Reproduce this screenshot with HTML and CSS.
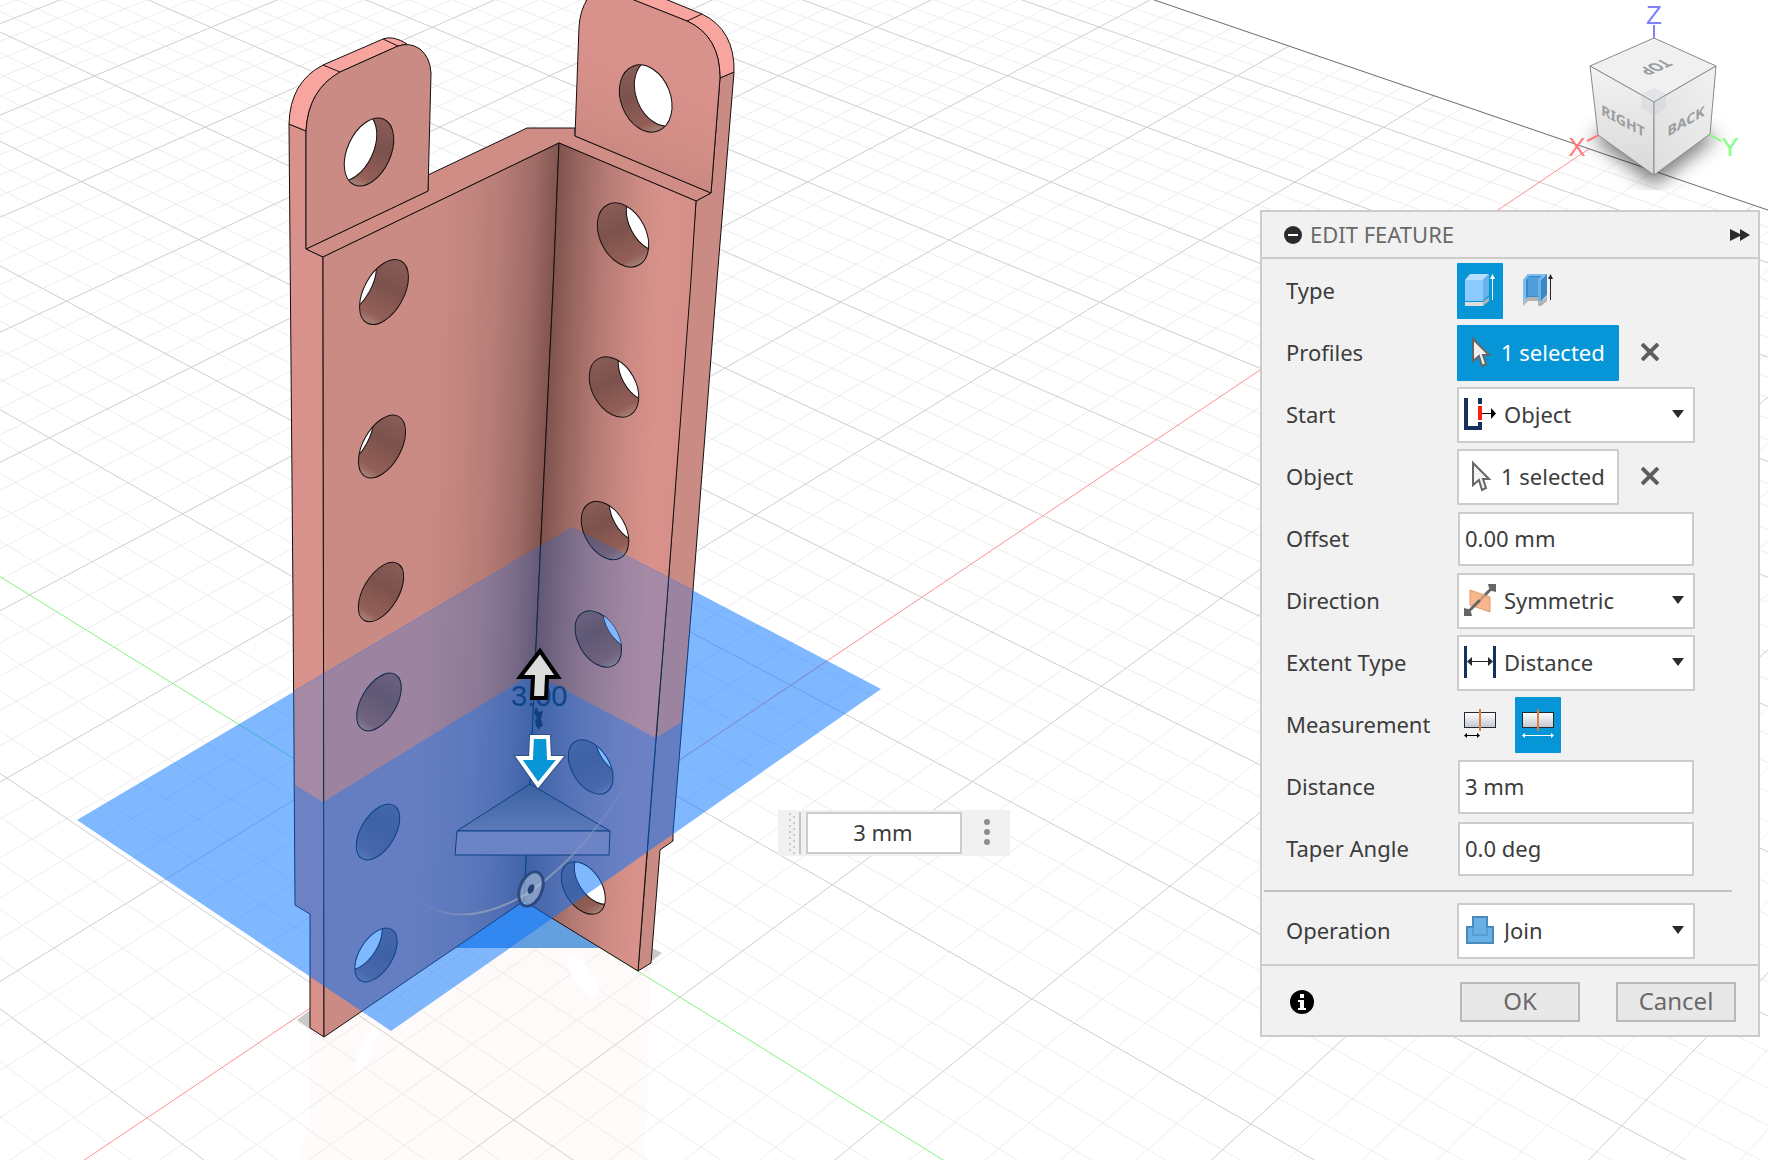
FILE: index.html
```html
<!DOCTYPE html>
<html lang="en">
<head>
<meta charset="utf-8">
<title>Edit Feature</title>
<link rel="stylesheet" href="styles.css">
</head>
<body>
<svg class="scene" viewBox="0 0 1768 1160" preserveAspectRatio="xMidYMid slice" role="img" aria-label="Bracket model">
  <defs>
    <linearGradient id="leftFace" gradientUnits="userSpaceOnUse" x1="323" y1="132" x2="559" y2="143">
      <stop offset="0" stop-color="#cb8b85"/><stop offset=".52" stop-color="#cb8b85"/><stop offset=".76" stop-color="#b87d77"/><stop offset=".9" stop-color="#a06c67"/><stop offset="1" stop-color="#835551"/>
    </linearGradient>
    <linearGradient id="rightFace" gradientUnits="userSpaceOnUse" x1="559" y1="143" x2="697" y2="149">
      <stop offset="0" stop-color="#7f534e"/><stop offset=".15" stop-color="#98655f"/><stop offset=".35" stop-color="#b57a74"/><stop offset=".6" stop-color="#cd8b84"/><stop offset=".8" stop-color="#d9928b"/><stop offset="1" stop-color="#d48f88"/>
    </linearGradient>
    <linearGradient id="tabFace" gradientUnits="userSpaceOnUse" x1="590" y1="180" x2="640" y2="60">
      <stop offset="0" stop-color="#bf817a"/><stop offset=".4" stop-color="#cf8c85"/><stop offset="1" stop-color="#d9928b"/>
    </linearGradient>
    <linearGradient id="bore" x1="0" y1="0" x2="0" y2="1">
      <stop offset="0" stop-color="#8a5d57"/><stop offset=".4" stop-color="#7c524c"/><stop offset=".85" stop-color="#935f57"/><stop offset="1" stop-color="#a88379"/>
    </linearGradient>
    <linearGradient id="gusset" x1="0" y1="0" x2="0" y2="1">
      <stop offset="0" stop-color="#785341"/><stop offset="1" stop-color="#b88275"/>
    </linearGradient>
    <linearGradient id="arcFade" gradientUnits="userSpaceOnUse" x1="418" y1="0" x2="642" y2="0">
      <stop offset="0" stop-color="#8496b8" stop-opacity="0"/><stop offset=".25" stop-color="#8496b8"/><stop offset=".6" stop-color="#8496b8"/><stop offset="1" stop-color="#8496b8" stop-opacity="0"/>
    </linearGradient>
    <linearGradient id="mirror" x1="0" y1="0" x2="0" y2="1">
      <stop offset="0" stop-color="#f6dcd6" stop-opacity=".16"/><stop offset="1" stop-color="#f6dcd6" stop-opacity=".1"/>
    </linearGradient>
  </defs>

  <path id="minorLines" class="grid-minor"/>
  <path id="majorLines" class="grid-major"/>
  <path id="edgeLine" class="grid-edge"/>
  <path id="axisX" class="axis-x"/>
  <path id="axisY" class="axis-y"/>

  <!-- floor reflection and contact shadows -->
  <path fill="url(#mirror)" d="M310 1028L324 1037L524 901L638 971L651 963L645 1160H297L310 1120Z"/>
  <g fill="#fff"><ellipse cx="583" cy="976" rx="9" ry="24" transform="rotate(-35 583 976)"/><ellipse cx="366" cy="1050" rx="6" ry="24" transform="rotate(24 366 1050)"/></g>
  <path fill="#c9c9c9" d="M297 1020L310 1010V1029ZM652 948L662 953L652 961Z"/>
  <path fill="#649fe0" d="M524 901L455 948H601Z"/>

  <!-- bracket body -->
  <g class="solid">
    <path fill="#d9928b" d="M289 124L306 131V249L323 257L324 1037L310 1028V914L295 905L293 600Z"/>
    <path fill="#cb8b85" d="M720 78L734 72L717 280L693 590L673 833V841L660 850L651 963L638 971L667 600L696 201L711 193Z"/>
    <path fill="#cf8d85" d="M306 249L323 257L559 143L696 201L711 193L575 136V128H527L428 175V191Z"/>
    <path fill="url(#leftFace)" d="M323 257L559 143L553 290L538 600L530 783L524 901L324 1037Z"/>
    <path fill="url(#rightFace)" d="M559 143L696 201L691 280L667 600L651 800L638 971L524 901L530 783L538 600L553 290Z"/>
    <path fill="#f7a59e" d="M289 124Q290 82 323 65L383 39Q393 35 407 44L398 46L340 72Q308 90 306 131Z"/>
    <path fill="#cb8b85" d="M306 131Q308 90 340 72L398 46Q410 42 420 49Q430 57 431 73L428 191L306 249Z"/>
    <path fill="#f7a59e" d="M631 -1L665 -1L702 14Q735 30 734 72L720 78Q720 36 687 21Z"/>
    <path fill="url(#tabFace)" d="M575 136L579 27Q580 10 588 -2H629L687 21Q720 36 720 78L711 193Z"/>
    <path fill="none" d="M323 65L340 72M383 39L398 46M702 14L687 21"/>
  </g>
  <g id="holes"></g>
  <g class="solid">
    <path fill="url(#gusset)" d="M530 784L457 831H610Z"/>
    <path fill="#d8958a" d="M457 831H610L609 855H455Z"/>
  </g>

  <!-- work plane: faint where the body is in front of it -->
  <path fill="#0071ff" fill-opacity=".23" d="M294 691L572 527L693 590L681 722L656 738L533 673L323 802L295 785Z"/>
  <path fill="#0071ff" fill-opacity=".5" fill-rule="evenodd" d="M77 820L572 527L881 689L391 1031ZM294 691L572 527L693 590L681 722L656 738L533 673L323 802L295 785Z"/>
  <g id="planeOpenings"></g>

  <!-- move handles -->
  <path fill="none" stroke="url(#arcFade)" stroke-width="2" d="M418 901Q464 932 530 892Q592 848 642 758"/>
  <g transform="rotate(22 531 889)"><ellipse cx="531" cy="889" rx="11" ry="18" fill="#b9cbdc" fill-opacity=".55" stroke="#2c4a80" stroke-width="3"/><ellipse cx="531" cy="889" rx="3" ry="5" fill="#24406e"/></g>
  <text class="dimension" x="511" y="706">3.00</text>
  <path fill="#11407f" d="M536 707L539 712L543 711L541 719L543 726L540 727L539 730L536 726L535 720L537 718L534 713Z"/>
  <path fill="#dcdcdc" stroke="#000" stroke-width="4" d="M540 651L558 677H547L546 698H532L533 677H520Z"/>
  <path fill="#0696d7" stroke="#1d4270" stroke-opacity=".6" stroke-width="6" d="M532 737H548L549 758H560L538 785L519 758H531Z"/>
  <path fill="#0696d7" stroke="#fff" stroke-width="4" d="M532 737H548L549 758H560L538 785L519 758H531Z"/>
</svg>

<svg class="viewcube" viewBox="0 0 228 190" role="img" aria-label="View cube">
  <defs>
    <filter id="soft" x="-50%" y="-50%" width="200%" height="200%"><feGaussianBlur stdDeviation="9"/></filter>
    <linearGradient id="cubeRight" x1="0" y1="0" x2="0" y2="1"><stop offset="0" stop-color="#f3f3f3"/><stop offset="1" stop-color="#d8d8d8"/></linearGradient>
    <linearGradient id="cubeBack" x1="1" y1="0" x2="0" y2="1"><stop offset="0" stop-color="#f1f1f1"/><stop offset="1" stop-color="#dedede"/></linearGradient>
  </defs>
  <path fill="#000" fill-opacity=".5" filter="url(#soft)" d="M50 136L114 114L178 136L114 186Z"/>
  <path stroke="#7f7fff" stroke-width="2" d="M114 25V39"/>
  <path stroke="#ff7f7f" stroke-width="2" d="M47 141L59 135"/>
  <path stroke="#7fff7f" stroke-width="2" d="M169 134L181 141"/>
  <g stroke="#8a8a8a" stroke-width="1" stroke-linejoin="round">
    <path fill="#f0f0f0" d="M114 38L176 66L114 102L50 66Z"/>
    <path fill="url(#cubeRight)" d="M50 66L114 102V175L58 135Z"/>
    <path fill="url(#cubeBack)" d="M176 66L114 102V175L170 134Z"/>
  </g>
  <path fill="#b8c0d0" fill-opacity=".25" d="M114 88L126 94V108L114 116L101 108V94Z"/>
  <g class="cube-label" text-anchor="middle">
    <text transform="translate(83 126) skewY(28)">RIGHT</text>
    <text transform="translate(146 126) skewY(-30)">BACK</text>
    <text transform="translate(110 64) rotate(157) skewX(37)">TOP</text>
  </g>
  <g class="axis-label" text-anchor="middle">
    <text x="114" y="24" fill="#7f7fff">Z</text>
    <text x="37" y="156" fill="#ff7f7f">X</text>
    <text x="190" y="156" fill="#7fff7f">Y</text>
  </g>
</svg>

<form class="quick-entry">
  <svg class="grip" width="8" height="42" viewBox="0 0 8 42" aria-hidden="true"><path stroke="#ccc" stroke-width="2" stroke-dasharray="2 4" d="M2 1V42M6 4V42"/></svg>
  <input class="quick-input" type="text" value="3 mm" aria-label="Distance value">
  <button class="more" type="button" aria-label="More options"><svg width="6" height="26" viewBox="0 0 6 26"><g fill="#8c8c8c"><circle cx="3" cy="3" r="3"/><circle cx="3" cy="13" r="3"/><circle cx="3" cy="23" r="3"/></g></svg></button>
</form>

<form class="panel">
  <header class="panel-head">
    <button class="plain" type="button" aria-label="Collapse"><svg width="18" height="18" viewBox="0 0 18 18"><circle cx="9" cy="9" r="9" fill="#2b2b2b"/><path stroke="#fff" stroke-width="2" d="M4 9H14"/></svg></button>
    <h1 class="title">EDIT FEATURE</h1>
    <button class="plain expand" type="button" aria-label="Dock panel"><svg width="20" height="12" viewBox="0 0 20 12"><path fill="#2b2b2b" d="M0 0L10 5V0L20 6L10 12V7L0 12Z"/></svg></button>
  </header>

  <div class="panel-body">
    <div class="row">
      <span class="label">Type</span>
      <div class="toggles">
        <button class="toggle on" type="button" aria-label="Solid extrude"><svg width="32" height="32" viewBox="0 0 32 32">
          <path fill="#dcdcdc" d="M1 28H19V32H1Z"/><path fill="#b4b4b4" d="M19 28L25 23V27L19 32Z"/>
          <path fill="#8bcaff" d="M1 6H19V27H1Z"/><path fill="#b5deff" d="M1 6L6 0H25L19 6Z"/><path fill="#69b1e8" d="M19 6L25 0V21L19 27Z"/>
          <path stroke="#fff" d="M28.500 3V26"/><path fill="#fff" d="M26 5L28.500 0L31 5Z"/></svg></button>
        <button class="toggle" type="button" aria-label="Thin extrude"><svg width="32" height="32" viewBox="0 0 32 32">
          <path fill="#b4b4b4" d="M1 28L6 23H17L21 26L25 22V27L19 32H16V27H6L1 32Z"/>
          <path fill="#3c87c4" d="M1 6L6 0H25V21L19 27H16V23H6L1 27Z"/>
          <path fill="#4f9fdd" d="M6 3H20L16 7V22H6Z"/><path fill="#7cc0f3" d="M1 6L6 0H25L19 6H16L20 2H7L4 6V25L1 27Z"/><path fill="#6ab3eb" d="M16 6H19V27H16Z"/>
          <path stroke="#222" d="M28.500 3V26"/><path fill="#222" d="M26 5L28.500 0L31 5Z"/></svg></button>
      </div>
    </div>
    <div class="row">
      <span class="label">Profiles</span>
      <button class="pick on" type="button"><svg width="20" height="32" viewBox="0 0 20 32"><path fill="#f0f0f0" stroke="#666" stroke-width="2" d="M2 3V25L8 20L11 30L15 28L12 19H18Z"/></svg>1 selected</button>
      <button class="plain clear" type="button" aria-label="Clear profiles"><svg width="18" height="18" viewBox="0 0 18 18"><path stroke="#5e5e5e" stroke-width="4" d="M1 1L17 17M17 1L1 17"/></svg></button>
    </div>
    <div class="row">
      <label class="label" for="start">Start</label>
      <div class="dropdown">
        <svg class="lead" width="32" height="32" viewBox="0 0 32 32"><path fill="#14305c" d="M0 0H4V28H14V24H18V32H0ZM14 0H18V6H14Z"/><path fill="#ff1e10" d="M14 8H18V22H14Z"/><path stroke="#000" d="M18 15.500H29"/><path fill="#000" d="M27 10L32 15.500L27 21Z"/></svg>
        <select id="start"><option>Object</option></select>
        <svg class="caret" width="12" height="8" viewBox="0 0 12 8"><path fill="#2b2b2b" d="M0 0H12L6 8Z"/></svg>
      </div>
    </div>
    <div class="row">
      <span class="label">Object</span>
      <button class="pick" type="button"><svg width="20" height="32" viewBox="0 0 20 32"><path fill="#f4f4f4" stroke="#666" stroke-width="2" d="M2 3V25L8 20L11 30L15 28L12 19H18Z"/></svg>1 selected</button>
      <button class="plain clear" type="button" aria-label="Clear object"><svg width="18" height="18" viewBox="0 0 18 18"><path stroke="#5e5e5e" stroke-width="4" d="M1 1L17 17M17 1L1 17"/></svg></button>
    </div>
    <div class="row">
      <label class="label" for="offset">Offset</label>
      <input class="field" id="offset" type="text" value="0.00 mm">
    </div>
    <div class="row">
      <label class="label" for="direction">Direction</label>
      <div class="dropdown">
        <svg class="lead" width="32" height="32" viewBox="0 0 32 32"><path fill="#f7b68b" stroke="#dd9c70" d="M6 6L26 13V28L6 21Z"/><path stroke="#666" stroke-width="3" d="M4 28L16 16M21 11L28 4"/><path stroke="#c79a7c" stroke-width="3" d="M16 16L21 11"/><path fill="#666" d="M24 0H32V8L24 0ZM32 8L28 7L25 4L24 0ZM0 24V32H8L7 28L4 25Z"/></svg>
        <select id="direction"><option>Symmetric</option></select>
        <svg class="caret" width="12" height="8" viewBox="0 0 12 8"><path fill="#2b2b2b" d="M0 0H12L6 8Z"/></svg>
      </div>
    </div>
    <div class="row">
      <label class="label" for="extent">Extent Type</label>
      <div class="dropdown">
        <svg class="lead" width="32" height="32" viewBox="0 0 32 32"><path fill="#14305c" d="M0 0H3V32H0ZM29 0H32V32H29Z"/><path stroke="#222b33" d="M5 15.500H27"/><path fill="#222b33" d="M3 15.500L8 11V20ZM29 15.500L24 11V20Z"/></svg>
        <select id="extent"><option>Distance</option></select>
        <svg class="caret" width="12" height="8" viewBox="0 0 12 8"><path fill="#2b2b2b" d="M0 0H12L6 8Z"/></svg>
      </div>
    </div>
    <div class="row">
      <span class="label">Measurement</span>
      <div class="toggles">
        <button class="toggle" type="button" aria-label="Half length"><svg width="32" height="32" viewBox="0 0 32 32"><defs><linearGradient id="bar" x1="0" y1="0" x2="0" y2="1"><stop offset="0" stop-color="#fff"/><stop offset="1" stop-color="#c3c7cd"/></linearGradient></defs><rect x=".5" y="4.500" width="31" height="15" fill="url(#bar)" stroke="#222b33"/><path fill="#e07b42" d="M15 1H17V23H15Z"/><path stroke="#000" d="M2 27.500H14"/><path fill="#000" d="M0 27.500L3 25V30ZM16 27.500L13 25V30Z"/></svg></button>
        <button class="toggle on" type="button" aria-label="Whole length"><svg width="32" height="32" viewBox="0 0 32 32"><rect x=".5" y="4.500" width="31" height="15" fill="url(#bar)" stroke="#222b33"/><path fill="#e07b42" d="M15 1H17V23H15Z"/><path stroke="#fff" d="M2 27.500H30"/><path fill="#fff" d="M0 27.500L3 25V30ZM32 27.500L29 25V30Z"/></svg></button>
      </div>
    </div>
    <div class="row">
      <label class="label" for="distance">Distance</label>
      <input class="field" id="distance" type="text" value="3 mm">
    </div>
    <div class="row">
      <label class="label" for="taper">Taper Angle</label>
      <input class="field" id="taper" type="text" value="0.0 deg">
    </div>
    <hr class="divider">
    <div class="row">
      <label class="label" for="operation">Operation</label>
      <div class="dropdown">
        <svg class="lead" width="32" height="32" viewBox="0 0 32 32"><path fill="#68b0e6" stroke="#4a8bbb" stroke-width="2" d="M9 3H23V13H29V29H3V13H9Z"/><path fill="none" stroke="#4a8bbb" stroke-opacity=".5" stroke-width="2" d="M9 13V21H23V13"/></svg>
        <select id="operation"><option>Join</option></select>
        <svg class="caret" width="12" height="8" viewBox="0 0 12 8"><path fill="#2b2b2b" d="M0 0H12L6 8Z"/></svg>
      </div>
    </div>
  </div>

  <footer class="panel-foot">
    <button class="plain info" type="button" aria-label="Information"><svg width="24" height="24" viewBox="0 0 24 24"><circle cx="12" cy="12" r="12" fill="#000"/><path fill="#fff" d="M10 4H14V8H10ZM8 10H14V18H16V20H8V18H10V12H8Z"/></svg></button>
    <button class="action" type="button">OK</button>
    <button class="action" type="button">Cancel</button>
  </footer>
</form>
<script src="scene.js"></script>
</body>
</html>
```
FILE: styles.css
```css
* {
  box-sizing: border-box;
}

body {
  position: relative;
  margin: 0;
  min-height: 100vh;
  padding: 210px 8px 24px;
  overflow-x: hidden;
  background: #fff;
  color: #3c3c3c;
  font: 22px/30px "Noto Sans", "Open Sans", sans-serif;
}

button,
input,
select {
  margin: 0;
  color: inherit;
  font: inherit;
}

svg {
  display: block;
  flex: none;
}

/* Canvas */

.scene {
  position: absolute;
  inset: 0;
  width: 100%;
  height: 100%;
}

.grid-minor,
.grid-major,
.grid-edge,
.axis-x,
.axis-y {
  fill: none;
  stroke-width: 1;
}

.grid-minor { stroke: #ededed; }
.grid-major { stroke: #cecece; }
.grid-edge { stroke: #707070; }
.axis-x { stroke: #ff9090; }
.axis-y { stroke: #80f580; }

.solid,
.hole-rim {
  stroke: #161010;
  stroke-width: 1;
  stroke-linejoin: round;
}

.dimension {
  fill: #0c4489;
  font: 29px "Liberation Sans", Arial, sans-serif;
}

.viewcube {
  position: absolute;
  top: 0;
  right: 0;
  width: 228px;
  height: 190px;
}

.cube-label {
  fill: #9a9da2;
  font: 700 14px "Liberation Sans Narrow", "Noto Sans", sans-serif;
}

.axis-label {
  font: 26px "Liberation Sans", Arial, sans-serif;
}

/* Value box that floats beside the handles */

.quick-entry {
  position: absolute;
  top: 810px;
  left: 44%;
  display: flex;
  align-items: center;
  width: 232px;
  height: 46px;
  padding-left: 10px;
  background: #f1f1f1;
}

.grip {
  margin-right: 3px;
}

.quick-input {
  width: 156px;
  height: 42px;
  margin-left: 7px;
  padding: 0 6px 2px 4px;
  border: 2px solid #ccc;
  background: #fff;
  text-align: center;
  box-shadow: -5px 0 0 #f1f1f1, -7px 0 0 #c4c4c4;
}

.more {
  display: grid;
  flex: 1;
  place-items: center;
  height: 100%;
  padding: 0 0 2px 2px;
  border: 0;
  background: none;
}

/* Panel */

.panel {
  position: relative;
  width: 500px;
  max-width: 100%;
  margin-left: auto;
  border: 2px solid #ccc;
  background: #f1f1f1;
}

.panel-head {
  display: flex;
  align-items: center;
  gap: 8px;
  height: 47px;
  padding: 0 8px 0 22px;
  border-bottom: 2px solid #ccc;
}

.title {
  flex: 1;
  margin: 0;
  padding-bottom: 2px;
  color: #696969;
  font-size: 22px;
  font-weight: 400;
}

.plain {
  padding: 0;
  border: 0;
  background: none;
}

.panel-body {
  display: flex;
  flex-direction: column;
  gap: 6px;
  padding: 4px 0 5px;
}

.row {
  display: flex;
  align-items: center;
  height: 56px;
  padding-left: 24px;
}

.label {
  width: 171px;
  padding-bottom: 2px;
}

.toggles {
  display: flex;
  gap: 12px;
}

.toggle {
  display: grid;
  place-items: center;
  width: 46px;
  height: 56px;
  padding: 0 0 2px;
  border: 0;
  border-radius: 1px;
  background: none;
}

.pick {
  display: flex;
  align-items: center;
  gap: 10px;
  width: 162px;
  height: 56px;
  padding: 0 0 2px 12px;
  border: 2px solid #ccc;
  border-radius: 1px;
  background: #fff;
}

.toggle.on,
.pick.on {
  border-color: #0696d7;
  background: #0696d7;
  color: #fff;
}

.clear {
  margin-left: 22px;
  padding-bottom: 2px;
}

.dropdown {
  position: relative;
  width: 238px;
}

.dropdown select {
  width: 100%;
  height: 56px;
  padding: 0 40px 2px 45px;
  border: 2px solid #ccc;
  border-radius: 1px;
  background: #fff;
  appearance: none;
}

.lead,
.caret {
  position: absolute;
  pointer-events: none;
}

.lead {
  top: 11px;
  left: 7px;
}

.caret {
  top: 23px;
  right: 11px;
}

.field {
  width: 236px;
  height: 54px;
  margin-left: 1px;
  padding: 0 4px 2px 5px;
  border: 2px solid #ccc;
  background: #fff;
}

.divider {
  width: 468px;
  height: 2px;
  margin: 7px 0 5px 2px;
  border: 0;
  background: #c2c2c2;
}

.panel-foot {
  display: flex;
  align-items: center;
  gap: 36px;
  height: 71px;
  padding: 2px 22px 0 28px;
  border-top: 2px solid #ccc;
}

.info {
  margin-right: auto;
}

.action {
  width: 120px;
  height: 40px;
  padding: 0 0 2px;
  border: 2px solid #b9b9b9;
  border-radius: 1px;
  background: #e8e8e8;
  color: #6a6a6a;
  font-size: 24px;
}
```
FILE: scene.js
```js
// Floor grid: perspective from the origin and the two vanishing points.
const origin = [496, 883.4];
const vanishX = [4300, -1673];
const vanishY = [-3519, -1600];
const kx = 0.042;
const ky = 0.0438;
const extent = 48; // minor cells from the origin to the edge

function project(i, j) {
  const a = kx * i / 5;
  const b = ky * j / 5;
  const w = 1 + a + b;
  return [0, 1].map(n => ((origin[n] + a * vanishX[n] + b * vanishY[n]) / w).toFixed(1)).join(" ");
}

const alongY = i => `M${project(i, -extent)}L${project(i, extent)}`;
const alongX = j => `M${project(-extent, j)}L${project(extent, j)}`;

let minor = "";
let major = "";
for (let n = -extent; n <= extent; n++) {
  if (n === 0) continue;
  if (n % 5 === 0) major += alongY(n) + alongX(n);
  else minor += alongY(n) + alongX(n);
}
document.getElementById("minorLines").setAttribute("d", minor);
document.getElementById("majorLines").setAttribute("d", major);
document.getElementById("edgeLine").setAttribute("d", alongY(extent));
document.getElementById("axisX").setAttribute("d", alongX(0));
document.getElementById("axisY").setAttribute("d", alongY(0));

// Holes: centre x, y, radii, tilt, then the shift of the far rim.
const holes = [
  [369, 152, 21.7, 36, 24.5, -17, -5],
  [384, 292, 20, 35.4, 28.7, -32, -10],
  [382, 446.5, 19, 34.4, 29, -32, -12],
  [381, 592, 17.5, 33, 31, -33, -14],
  [379, 702, 17.5, 32, 31, -60, -20],
  [378, 832, 17, 31, 31.5, -60, -20],
  [376, 955, 16.5, 30, 32, -15, -12],
  [645.7, 98.5, 24.8, 34.7, -21.5, 15, -6],
  [623, 235, 23, 34, -27, 29, -15],
  [614, 387, 21.9, 32.4, -29, 29, -15],
  [605, 530.5, 20.5, 31.5, -30, 28, -17],
  [598.3, 639, 19.8, 30.7, -31, 28, -18],
  [590.7, 767, 18.7, 29.8, -32, 27, -19],
  [583.3, 888, 18.3, 29, -33, 13, -10]
];

let drawn = "";
holes.forEach(([x, y, rx, ry, tilt, dx, dy], n) => {
  const oval = (cx, cy, rest) => `<ellipse cx="${cx}" cy="${cy}" rx="${rx}" ry="${ry}" transform="rotate(${tilt} ${cx} ${cy})" ${rest}/>`;
  drawn += `<clipPath id="hole${n}">${oval(x, y, "")}</clipPath>`
    + oval(x, y, 'fill="url(#bore)"')
    + `<g clip-path="url(#hole${n})">${oval(x + dx, y + dy, 'fill="#fff" class="hole-rim"')}</g>`
    + oval(x, y, 'fill="none" class="hole-rim"');
  if (n === 11) {
    document.getElementById("planeOpenings").innerHTML =
      `<g clip-path="url(#hole${n})">${oval(x + dx, y + dy, 'fill="#80b8ff"')}</g>`;
  }
});
document.getElementById("holes").innerHTML = drawn;
```
